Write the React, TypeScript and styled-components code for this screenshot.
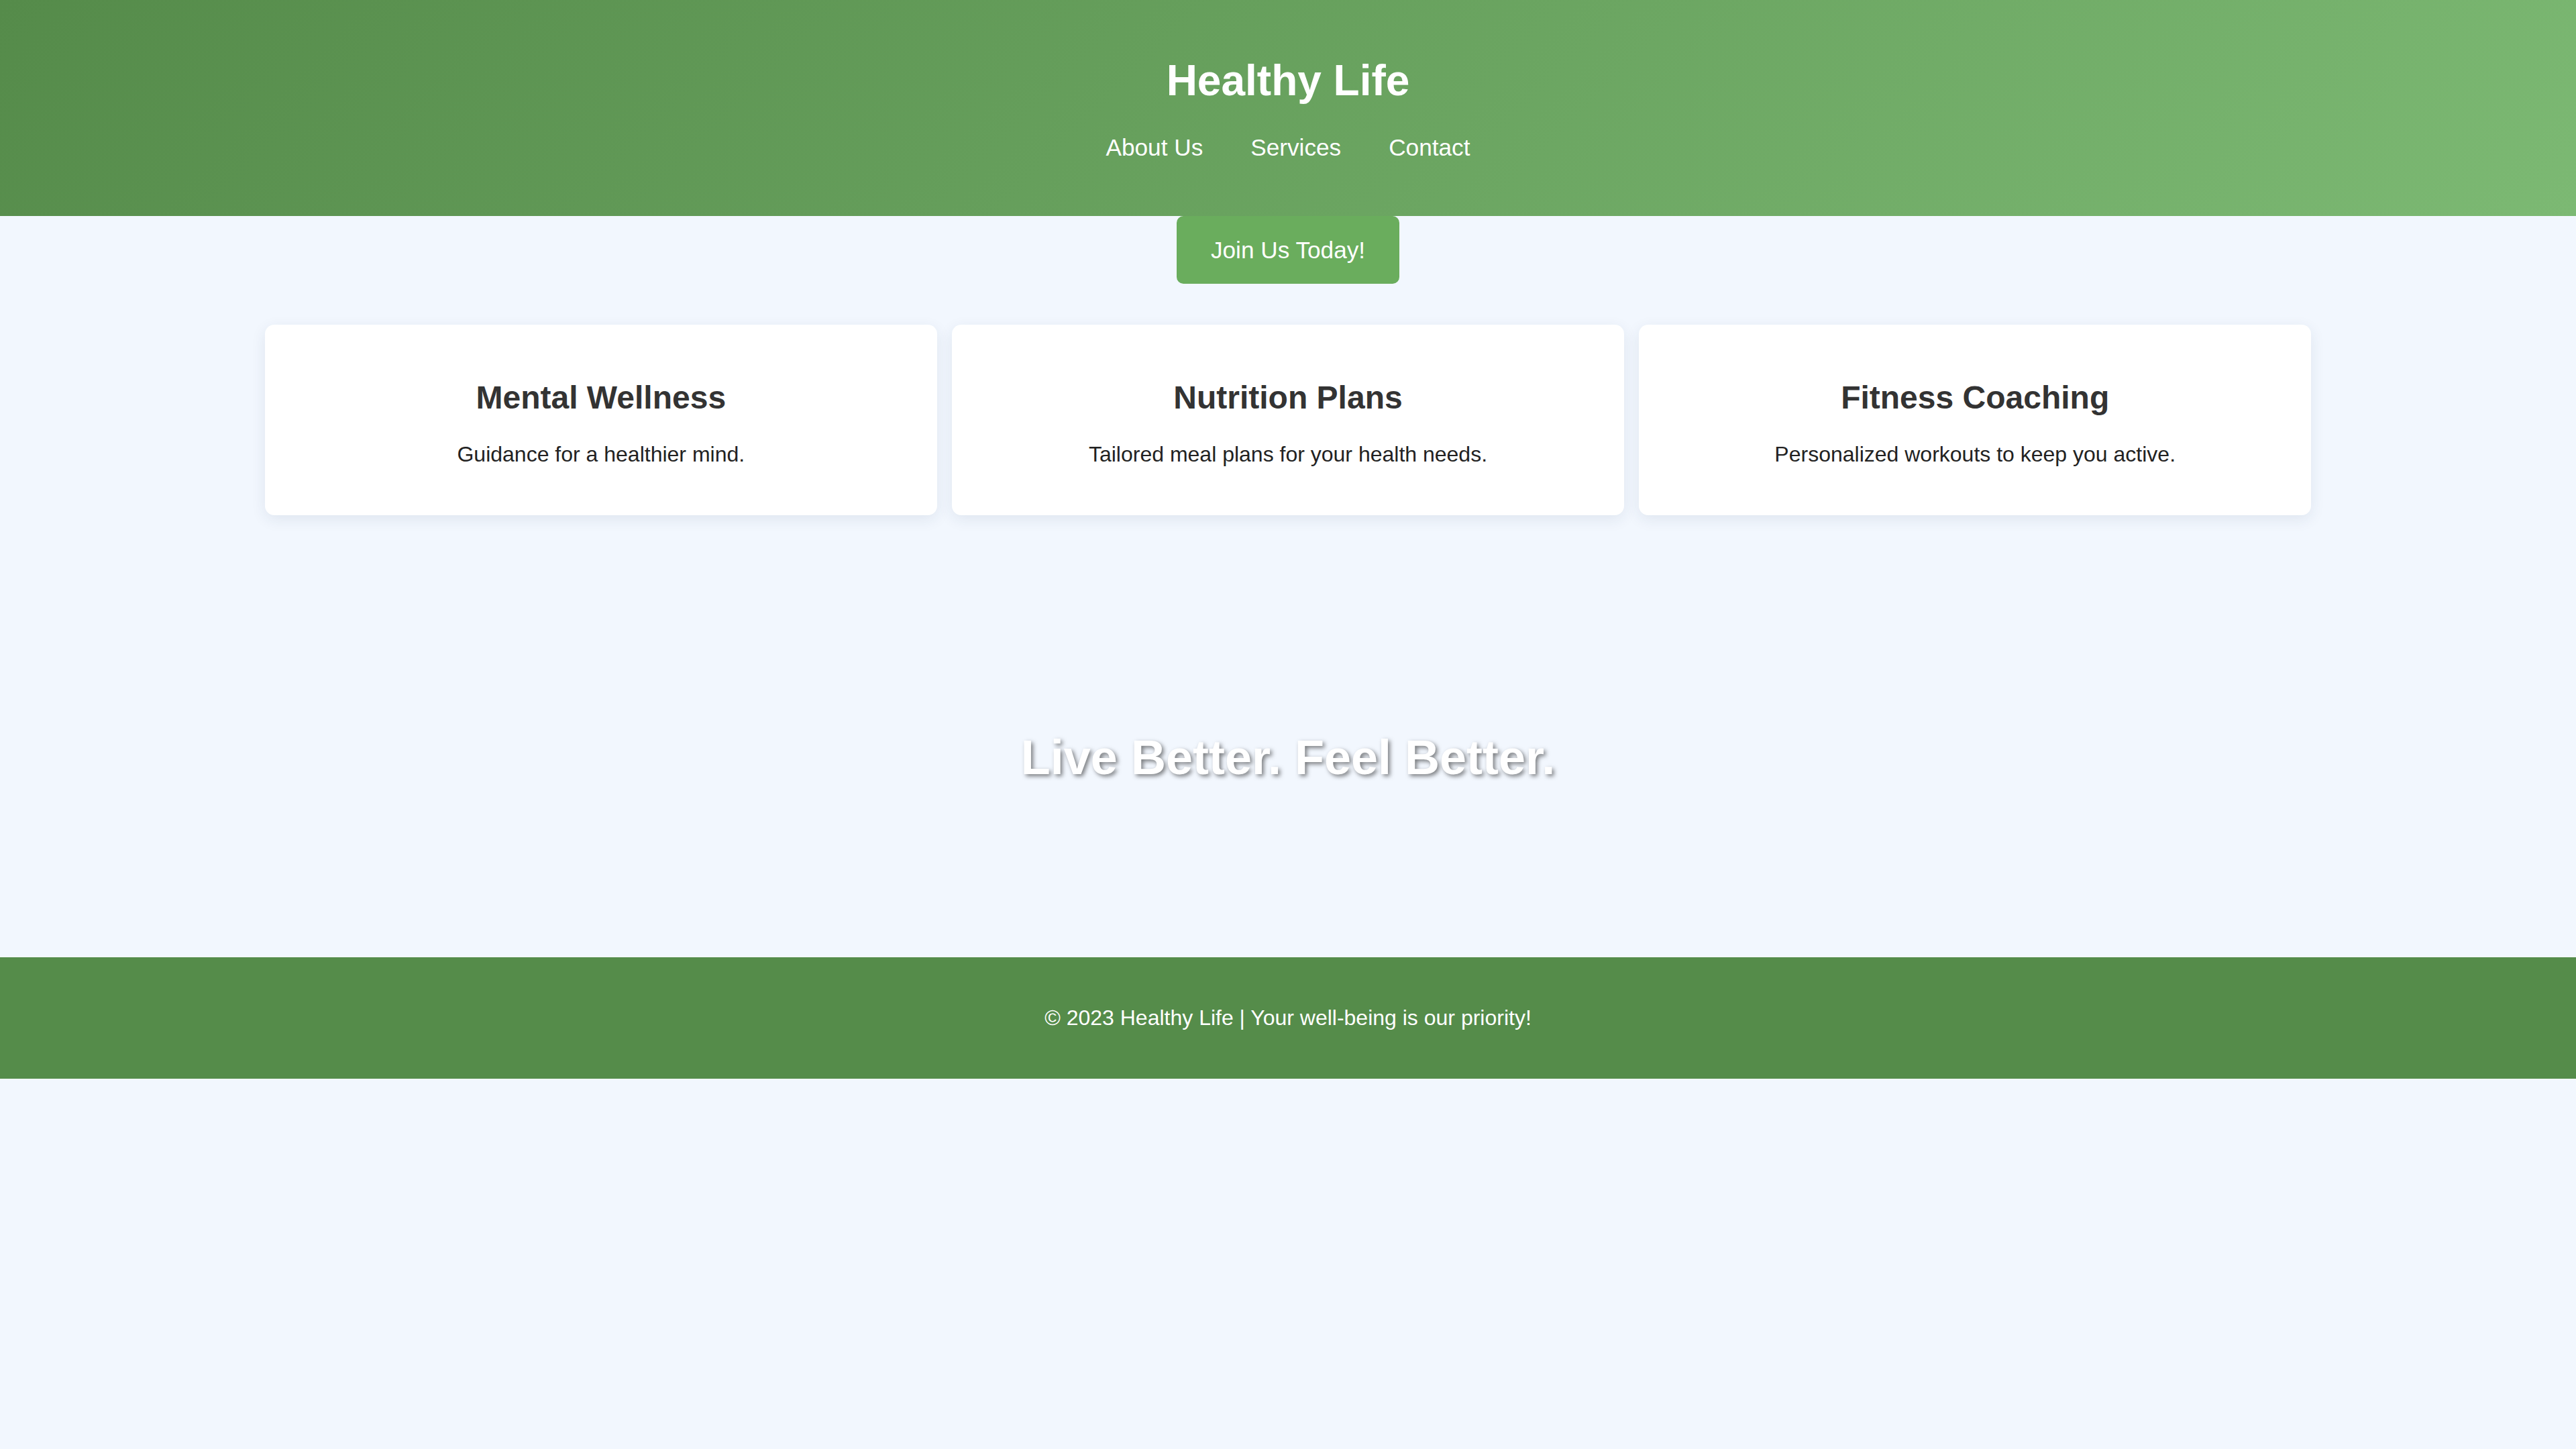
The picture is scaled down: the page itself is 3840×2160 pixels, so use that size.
import React from "react";
import styled, { createGlobalStyle } from "styled-components";

const GlobalStyle = createGlobalStyle`
  html, body {
    margin: 0;
    padding: 0;
    background: #f2f7fe;
    font-family: "Liberation Sans", Arial, sans-serif;
    font-size: 32px;
    color: #333333;
  }
`;

const Header = styled.header`
  background: linear-gradient(135deg, #558b4a 0%, #7cb973 100%);
  color: #ffffff;
  text-align: center;
  padding: 40px 0 40px;
`;

const Title = styled.h1`
  font-size: 64px;
  font-weight: 700;
  margin: 43px 0 43px;
  line-height: normal;
`;

const Nav = styled.nav`
  display: flex;
  justify-content: center;
  gap: 71px;
  padding-bottom: 42px;
`;

const NavLink = styled.a`
  color: #ffffff;
  text-decoration: none;
  font-size: 35.2px;
  line-height: normal;
`;

const CtaWrap = styled.div`
  display: flex;
  justify-content: center;
`;

const CtaButton = styled.button`
  background: #6aad5d;
  color: #ffffff;
  border: none;
  border-radius: 10px;
  font-family: "Liberation Sans", Arial, sans-serif;
  font-size: 35.2px;
  line-height: normal;
  padding: 30.5px 51px;
  cursor: pointer;
`;

const Cards = styled.section`
  width: 3050px;
  margin: 60.5px auto 0;
  display: grid;
  grid-template-columns: repeat(3, 1fr);
  gap: 22.6px;
`;

const Card = styled.div`
  background: #ffffff;
  border-radius: 14px;
  box-shadow: 0 6px 22px rgba(30, 50, 90, 0.09);
  padding: 40px;
  text-align: center;
`;

const CardTitle = styled.h3`
  font-size: 48px;
  font-weight: 700;
  color: #333333;
  margin: 41px 0 39px;
  line-height: normal;
`;

const CardText = styled.p`
  font-size: 32px;
  color: #222222;
  margin: 0 0 32px;
  line-height: normal;
`;

const Hero = styled.section`
  text-align: center;
  padding: 320px 0 257px;
`;

const HeroText = styled.h2`
  margin: 0;
  font-size: 72px;
  font-weight: 700;
  color: #ffffff;
  line-height: normal;
  text-shadow: 3px 3px 6px rgba(0, 0, 0, 0.5);
`;

const Footer = styled.footer`
  background: #558c4a;
  color: #ffffff;
  text-align: center;
  padding: 40px 0;
`;

const FooterText = styled.p`
  margin: 32px 0;
  font-size: 32px;
  line-height: normal;
`;

const cards = [
  { title: "Mental Wellness", text: "Guidance for a healthier mind." },
  { title: "Nutrition Plans", text: "Tailored meal plans for your health needs." },
  { title: "Fitness Coaching", text: "Personalized workouts to keep you active." },
];

export default function App() {
  return (
    <>
      <GlobalStyle />
      <Header>
        <Title>Healthy Life</Title>
        <Nav>
          <NavLink href="#">About Us</NavLink>
          <NavLink href="#">Services</NavLink>
          <NavLink href="#">Contact</NavLink>
        </Nav>
      </Header>
      <CtaWrap>
        <CtaButton>Join Us Today!</CtaButton>
      </CtaWrap>
      <Cards>
        {cards.map((c) => (
          <Card key={c.title}>
            <CardTitle>{c.title}</CardTitle>
            <CardText>{c.text}</CardText>
          </Card>
        ))}
      </Cards>
      <Hero>
        <HeroText>Live Better. Feel Better.</HeroText>
      </Hero>
      <Footer>
        <FooterText>© 2023 Healthy Life | Your well-being is our priority!</FooterText>
      </Footer>
    </>
  );
}
